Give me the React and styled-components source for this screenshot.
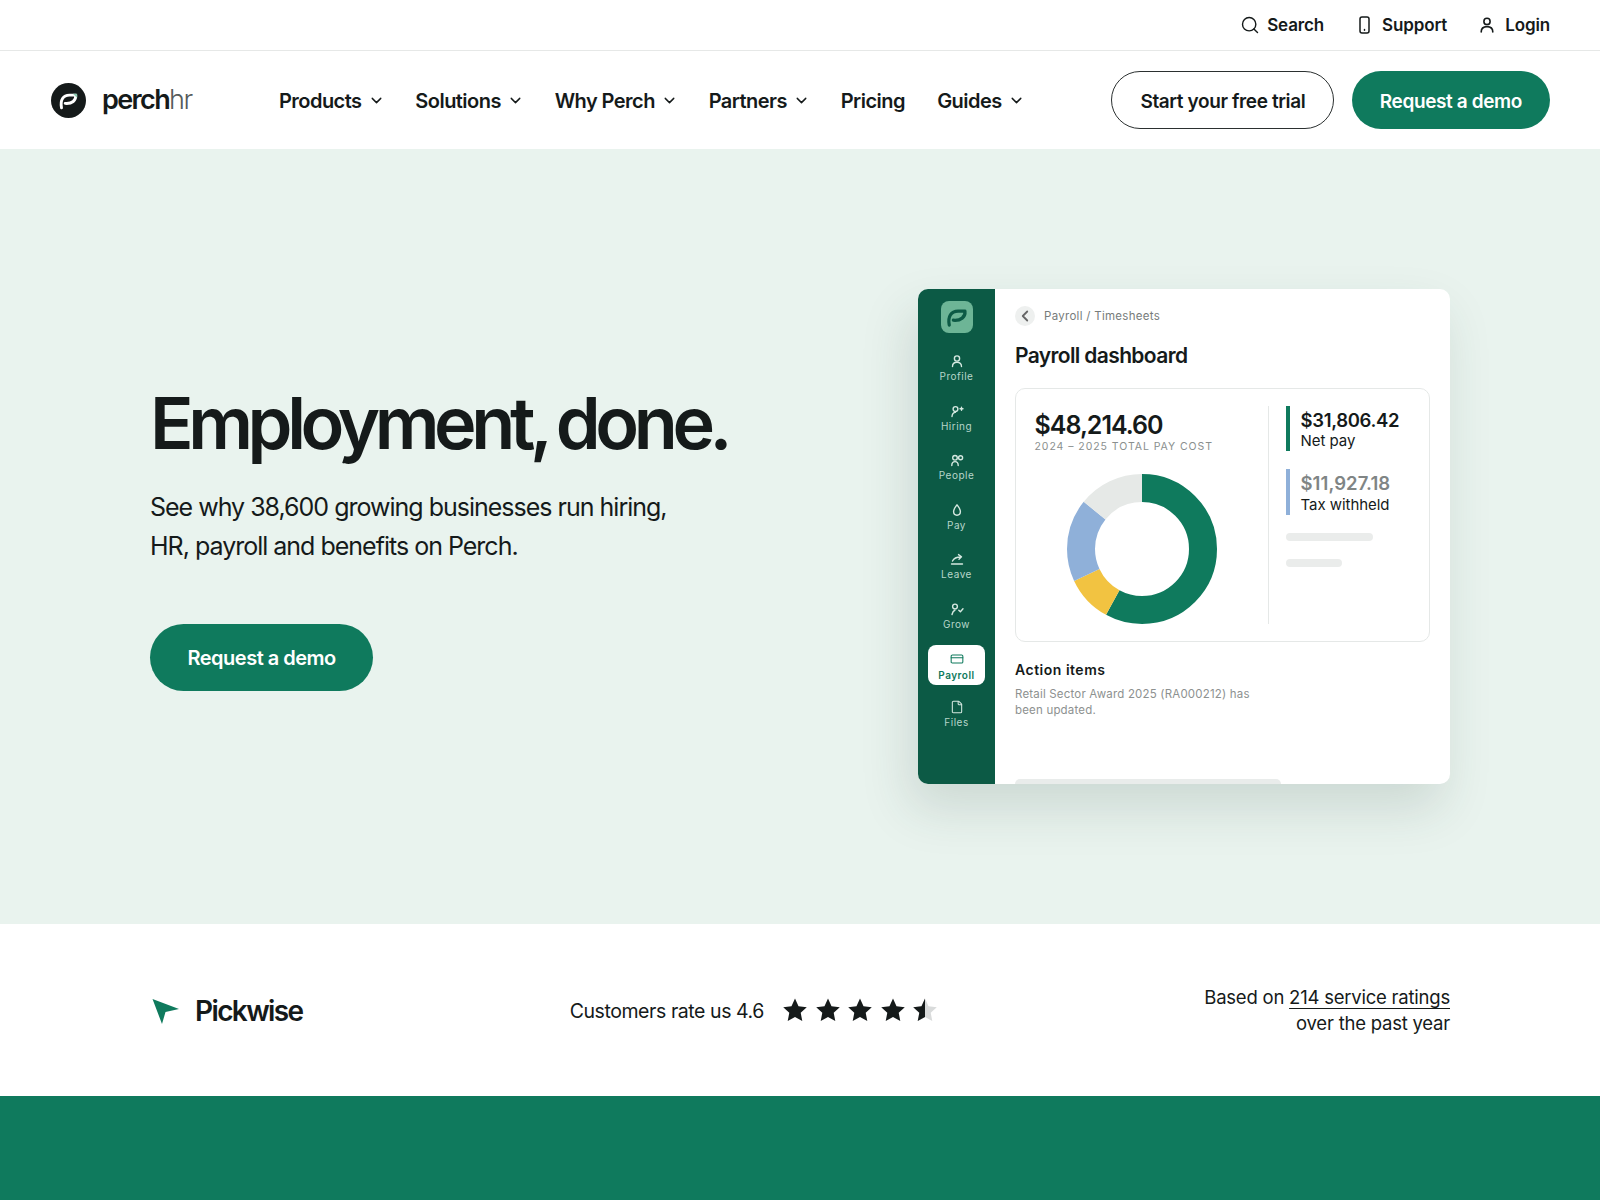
import React from "react";
import styled, { createGlobalStyle } from "styled-components";
import { Search, ChevronDown, ChevronLeft, CreditCard, File } from "lucide-react";

const GlobalStyle = createGlobalStyle`
  * { box-sizing: border-box; }
  html, body { margin: 0; padding: 0; background: #fff; }
  body {
    font-family: Inter, "Liberation Sans", sans-serif;
    color: #151a1a;
    -webkit-font-smoothing: antialiased;
  }
`;

const Page = styled.div`
  width: 1600px;
  height: 1200px;
  overflow: hidden;
`;

/* top utility bar */
const TopBar = styled.div`
  height: 51px;
  border-bottom: 1px solid #e6e8e7;
  display: flex;
  align-items: center;
  justify-content: flex-end;
  gap: 33px;
  padding: 0 50px 1px 0;
`;

const TopLink = styled.a`
  display: flex;
  align-items: center;
  gap: ${(p) => p.$gap || 9}px;
  margin-right: ${(p) => p.$after || 0}px;
  font-size: 17px;
  font-weight: 600;
  letter-spacing: -0.008em;
`;

/* main nav */
const Header = styled.header`
  height: 98px;
  display: flex;
  align-items: center;
  padding: 0 50px 0 51px;
`;

const Brand = styled.div`
  display: flex;
  align-items: center;
  gap: 16px;
  width: 228px;
`;

const Wordmark = styled.div`
  font-size: 27px;
  font-weight: 600;
  letter-spacing: -0.06em;
  line-height: 36px;
  span {
    font-weight: 300;
    color: #555b5b;
  }
`;

const Nav = styled.nav`
  display: flex;
  align-items: center;
  gap: 32.3px;
  flex: 1;
  padding-top: 2px;
`;

const NavItem = styled.a`
  display: flex;
  align-items: center;
  gap: 6px;
  font-size: 20px;
  font-weight: 600;
  letter-spacing: -0.027em;
  svg { margin: -1px -1.5px 0 0; }
`;

const Actions = styled.div`
  display: flex;
  gap: 17.5px;
`;

const Button = styled.a`
  height: ${(p) => p.$height || 58}px;
  padding: 2px ${(p) => p.$pad || 28}px 0;
  border-radius: 999px;
  display: inline-flex;
  align-items: center;
  font-size: ${(p) => p.$size || 19}px;
  font-weight: 600;
  letter-spacing: ${(p) => p.$track || "-0.02em"};
  color: ${(p) => (p.$outline ? "#151a1a" : "#fff")};
  background: ${(p) => (p.$outline ? "#fff" : "#0f7a5d")};
  border: ${(p) => (p.$outline ? "1.5px solid #2b3030" : "none")};
`;

/* hero */
const Hero = styled.section`
  height: 775px;
  background: #e9f3ee;
  display: flex;
  align-items: center;
  justify-content: space-between;
  padding: 0 150px;
`;

const HeroText = styled.div`
  display: flex;
  flex-direction: column;
  align-items: flex-start;
  margin-top: -2px;
`;

const Title = styled.h1`
  margin: 0;
  font-size: 72px;
  line-height: 84px;
  font-weight: 600;
  letter-spacing: -0.075em;
  word-spacing: -3px;
  white-space: nowrap;
`;

const Lead = styled.p`
  margin: 23px 0 0;
  font-size: 25px;
  line-height: 39px;
  letter-spacing: -0.04em;
  width: 560px;
`;

const HeroButton = styled(Button)`
  margin-top: 58px;
`;

/* product mock */
const Mock = styled.div`
  width: 532px;
  height: 495px;
  display: flex;
  border-radius: 10px;
  overflow: hidden;
  background: #fff;
  box-shadow: -8px 24px 50px rgba(40, 70, 60, 0.15);
`;

const Sidebar = styled.aside`
  width: 77px;
  background: #0c5a45;
  display: flex;
  flex-direction: column;
  align-items: center;
  padding-top: 12px;
`;

const Tile = styled.div`
  width: 32px;
  height: 32px;
  border-radius: 8px;
  background: #6db596;
  display: flex;
  align-items: center;
  justify-content: center;
  margin-bottom: 15px;
`;

const SideItem = styled.div`
  width: 57px;
  height: 49.6px;
  display: flex;
  flex-direction: column;
  align-items: center;
  padding-top: 6px;
  gap: 2px;
  font-size: 10px;
  line-height: 13px;
  letter-spacing: 0.05em;
  color: #b7d6ca;
  svg { display: block; }
`;

const ActiveItem = styled(SideItem)`
  height: 40px;
  margin: -1px 0 9px;
  padding-top: 7px;
  gap: 3px;
  border-radius: 8px;
  background: #fff;
  color: #0f7a5d;
  font-weight: 600;
`;

const Main = styled.div`
  flex: 1;
  padding: 17px 20px 0;
  display: flex;
  flex-direction: column;
  position: relative;
`;

const Crumbs = styled.div`
  display: flex;
  align-items: center;
  gap: 9px;
  height: 20px;
  font-size: 11.5px;
  letter-spacing: 0.025em;
  color: #777c7b;
`;

const BackDot = styled.div`
  width: 20px;
  height: 20px;
  border-radius: 50%;
  background: #eef0ef;
  display: flex;
  align-items: center;
  justify-content: center;
  color: #666;
`;

const MockTitle = styled.h2`
  margin: 16px 0 0;
  font-size: 21px;
  line-height: 28px;
  font-weight: 600;
  letter-spacing: -0.03em;
`;

const Card = styled.div`
  margin-top: 18px;
  height: 254px;
  border: 1.5px solid #e5e8e7;
  border-radius: 10px;
  display: flex;
  padding: 17px 18px 17px 18.5px;
`;

const CardLeft = styled.div`
  width: 234px;
  border-right: 1.5px solid #e5e8e7;
  display: flex;
  flex-direction: column;
  padding-top: 3px;
`;

const Total = styled.div`
  font-size: 25px;
  line-height: 32px;
  font-weight: 600;
  letter-spacing: -0.04em;
`;

const TotalLabel = styled.div`
  font-size: 10.5px;
  line-height: 13px;
  margin-top: -1px;
  letter-spacing: 0.09em;
  color: #8a8f8e;
  white-space: nowrap;
`;

const Donut = styled.svg`
  margin: 21px 0 0 32px;
  display: block;
`;

const CardRight = styled.div`
  flex: 1;
  padding-left: 17.5px;
  display: flex;
  flex-direction: column;
`;

const Stat = styled.div`
  border-left: 4px solid ${(p) => p.$color};
  height: ${(p) => p.$h}px;
  padding: 3px 0 0 10.5px;
  margin-bottom: 18px;
`;

const StatValue = styled.div`
  font-size: 18.5px;
  line-height: 23px;
  font-weight: 600;
  letter-spacing: ${(p) => p.$track || "-0.018em"};
  color: ${(p) => p.$color || "#151a1a"};
`;

const StatLabel = styled.div`
  font-size: 15px;
  line-height: 20px;
  margin-top: ${(p) => p.$nudge || 0}px;
  letter-spacing: -0.003em;
`;

const Skeleton = styled.div`
  width: ${(p) => p.$w}px;
  height: 8px;
  border-radius: 4px;
  background: #eaeceb;
  margin-bottom: 18px;
`;

const ActionTitle = styled.h3`
  margin: 19px 0 0;
  font-size: 14px;
  line-height: 18px;
  font-weight: 600;
  letter-spacing: 0.036em;
`;

const ActionText = styled.p`
  margin: 7px 0 0;
  width: 245px;
  font-size: 11.5px;
  line-height: 16px;
  letter-spacing: 0.016em;
  color: #8d9190;
`;

const Peek = styled.div`
  position: absolute;
  left: 20px;
  bottom: 0;
  width: 266px;
  height: 5px;
  border-radius: 5px 5px 0 0;
  background: #e9eceb;
`;

/* rating strip */
const Rating = styled.section`
  height: 172px;
  display: flex;
  align-items: center;
  justify-content: space-between;
  padding: 0 150px;
`;

const Pickwise = styled.div`
  display: flex;
  align-items: center;
  gap: 15px;
  font-size: 28px;
  font-weight: 600;
  letter-spacing: -0.058em;
  padding-top: 1px;
`;

const Score = styled.div`
  display: flex;
  align-items: center;
  gap: 19.5px;
`;

const ScoreText = styled.span`
  font-size: 19.5px;
  letter-spacing: -0.022em;
  margin-top: 2px;
`;

const Stars = styled.div`
  display: flex;
  gap: 8.4px;
`;

const HalfStar = styled.div`
  position: relative;
  width: 24px;
  height: 24px;
`;

const HalfClip = styled.div`
  position: absolute;
  top: 0;
  left: 0;
  width: 12px;
  height: 24px;
  overflow: hidden;
`;

const Based = styled.div`
  text-align: right;
  font-size: 18.5px;
  line-height: 25.5px;
  letter-spacing: -0.012em;
  padding-top: 1px;
  a {
    text-decoration: underline;
    text-underline-offset: 4px;
    text-decoration-thickness: 1px;
  }
`;

const Footer = styled.div`
  height: 104px;
  background: #0f7a5d;
`;

const PerchMark = ({ size = 35, box = "0 0 36 36", bg, fg, tip }) => (
  <svg width={size} height={size} viewBox={box}>
    {bg && <circle cx="18" cy="18" r="18" fill={bg} />}
    <path
      d="M10.8 25.5 C9.3 17.5 12.5 12.5 19 12.5 C21.5 12.5 23.5 12.5 25.4 12.5 C26 18 21.5 21.6 14.6 21"
      fill="none"
      stroke={fg}
      strokeWidth="3"
      strokeLinecap="round"
      strokeLinejoin="round"
    />
    {tip && <path d="M22.5 11 L26.9 11 L26.9 15.2 Z" fill={tip} />}
  </svg>
);

const Glyph = ({ children, color = "#d5e8e0" }) => (
  <svg width="14" height="14" viewBox="0 0 14 14" fill="none" stroke={color} strokeWidth="1.4" strokeLinecap="round" strokeLinejoin="round">
    {children}
  </svg>
);

const StarShape = ({ color }) => (
  <svg width="24" height="24" viewBox="0 0 24 24">
    <path
      d="M12 .6 L15.53 8.15 L23.79 9.17 L17.71 14.85 L19.29 23.03 L12 19 L4.71 23.03 L6.29 14.85 L.21 9.17 L8.47 8.15 Z"
      fill={color}
    />
  </svg>
);

const sideItems = [
  {
    label: "Profile",
    icon: (
      <Glyph>
        <circle cx="7" cy="4.5" r="2.6" />
        <path d="M2.5 12.5 C2.5 9.5 4.5 8.2 7 8.2 C9.5 8.2 11.5 9.5 11.5 12.5" />
      </Glyph>
    ),
  },
  {
    label: "Hiring",
    icon: (
      <Glyph>
        <circle cx="5.5" cy="5" r="2.4" />
        <path d="M2 12.5 C2.2 10 3.5 8.5 5.5 8.4" />
        <path d="M10 4.8 H13 M11.5 3.3 V6.3" />
      </Glyph>
    ),
  },
  {
    label: "People",
    icon: (
      <Glyph>
        <circle cx="5" cy="4.8" r="2.3" />
        <circle cx="10.6" cy="4.8" r="2" />
        <path d="M1.8 12.5 C1.8 9.8 3.2 8.6 5 8.6 C6.8 8.6 8.2 9.8 8.2 12.5" />
      </Glyph>
    ),
  },
  {
    label: "Pay",
    icon: (
      <Glyph>
        <path d="M7 1.8 C5.2 4.4 3.6 6 3.6 8.6 C3.6 10.8 5.1 12.2 7 12.2 C8.9 12.2 10.4 10.8 10.4 8.6 C10.4 6 8.8 4.4 7 1.8 Z" />
      </Glyph>
    ),
  },
  {
    label: "Leave",
    icon: (
      <Glyph>
        <path d="M1.5 12 H12.5" />
        <path d="M2.5 9 C4 6 6.5 5 10.5 5 M8.5 2.6 L11.5 4.8 L9 7.2" />
      </Glyph>
    ),
  },
  {
    label: "Grow",
    icon: (
      <Glyph>
        <circle cx="5" cy="4.5" r="2.4" />
        <path d="M2 12.5 C2.4 10.5 3.4 8.8 5 8" />
        <path d="M8.8 8.2 L10.4 9.8 L13 6.8" />
      </Glyph>
    ),
  },
];

const segments = [
  { color: "#0f7a5d", from: 0, to: 208.7 },
  { color: "#f2c341", from: 208.7, to: 244.8 },
  { color: "#8fb0d9", from: 244.8, to: 309 },
  { color: "#e6e9e7", from: 309, to: 360 },
];

const App = () => {
  return (
    <Page>
      <GlobalStyle />
      <TopBar>
        <TopLink $gap={7.5} $after={2}><Search size={20} strokeWidth={1.7} />Search</TopLink>
        <TopLink $gap={12}>
          <svg width="11" height="18" viewBox="0 0 11 18" fill="none" stroke="#151a1a" strokeWidth="1.5">
            <rect x="1" y="1" width="9" height="16" rx="2" />
            <path d="M5.5 13.6 V14.2" strokeLinecap="round" />
          </svg>
          Support
        </TopLink>
        <TopLink $gap={11}>
          <svg width="14" height="16" viewBox="0 0 14 16" fill="none" stroke="#151a1a" strokeWidth="1.6" strokeLinecap="round">
            <circle cx="7" cy="4.4" r="3.1" />
            <path d="M1.2 15 C1.2 11.2 3.8 9.6 7 9.6 C10.2 9.6 12.8 11.2 12.8 15" />
          </svg>
          Login
        </TopLink>
      </TopBar>

      <Header>
        <Brand>
          <PerchMark bg="#151a1a" fg="#fff" tip="#8fcbb2" />
          <Wordmark>perch<span>hr</span></Wordmark>
        </Brand>
        <Nav>
          {["Products", "Solutions", "Why Perch", "Partners", "Pricing", "Guides"].map((item) => (
            <NavItem key={item}>
              {item}
              {item !== "Pricing" && <ChevronDown size={17} strokeWidth={2} />}
            </NavItem>
          ))}
        </Nav>
        <Actions>
          <Button $outline>Start your free trial</Button>
          <Button>Request a demo</Button>
        </Actions>
      </Header>

      <Hero>
        <HeroText>
          <Title>Employment, done.</Title>
          <Lead>See why 38,600 growing businesses run hiring, HR, payroll and benefits on Perch.</Lead>
          <HeroButton $height={67} $pad={37.5} $size={20} $track="-0.025em">Request a demo</HeroButton>
        </HeroText>

        <Mock>
          <Sidebar>
            <Tile><PerchMark size={28} box="5 5 26 26" fg="#0c5a45" /></Tile>
            {sideItems.map((item) => (
              <SideItem key={item.label}>
                {item.icon}
                {item.label}
              </SideItem>
            ))}
            <ActiveItem>
              <CreditCard size={14} strokeWidth={1.8} />
              Payroll
            </ActiveItem>
            <SideItem>
              <File size={14} strokeWidth={1.8} color="#d5e8e0" />
              Files
            </SideItem>
          </Sidebar>

          <Main>
            <Crumbs>
              <BackDot><ChevronLeft size={18} strokeWidth={2.4} /></BackDot>
              Payroll / Timesheets
            </Crumbs>
            <MockTitle>Payroll dashboard</MockTitle>
            <Card>
              <CardLeft>
                <Total>$48,214.60</Total>
                <TotalLabel>2024 – 2025 TOTAL PAY COST</TotalLabel>
                <Donut width="150" height="150" viewBox="0 0 150 150">
                  {segments.map((s) => (
                    <circle
                      key={s.color}
                      cx="75"
                      cy="75"
                      r="61"
                      fill="none"
                      stroke={s.color}
                      strokeWidth="28"
                      pathLength="360"
                      strokeDasharray={`${s.to - s.from} 360`}
                      strokeDashoffset={-s.from}
                      transform="rotate(-90 75 75)"
                    />
                  ))}
                </Donut>
              </CardLeft>
              <CardRight>
                <Stat $color="#0f7a5d" $h={45}>
                  <StatValue>$31,806.42</StatValue>
                  <StatLabel $nudge={-1}>Net pay</StatLabel>
                </Stat>
                <Stat $color="#8fb0d9" $h={46}>
                  <StatValue $color="#808585" $track="0.004em">$11,927.18</StatValue>
                  <StatLabel>Tax withheld</StatLabel>
                </Stat>
                <Skeleton $w={87} />
                <Skeleton $w={56} />
              </CardRight>
            </Card>
            <ActionTitle>Action items</ActionTitle>
            <ActionText>Retail Sector Award 2025 (RA000212) has been updated.</ActionText>
            <Peek />
          </Main>
        </Mock>
      </Hero>

      <Rating>
        <Pickwise>
          <svg width="30" height="28" viewBox="0 0 30 28">
            <path d="M2.5 2 L29 12 L15.5 15 L12 27 Z" fill="#0f7a5d" />
          </svg>
          Pickwise
        </Pickwise>
        <Score>
          <ScoreText>Customers rate us 4.6</ScoreText>
          <Stars>
            {[0, 1, 2, 3].map((i) => (
              <StarShape key={i} color="#151a1a" />
            ))}
            <HalfStar>
              <StarShape color="#d9dbdb" />
              <HalfClip><StarShape color="#151a1a" /></HalfClip>
            </HalfStar>
          </Stars>
        </Score>
        <Based>
          Based on <a>214 service ratings</a>
          <br />
          over the past year
        </Based>
      </Rating>

      <Footer />
    </Page>
  );
};

export default App;
